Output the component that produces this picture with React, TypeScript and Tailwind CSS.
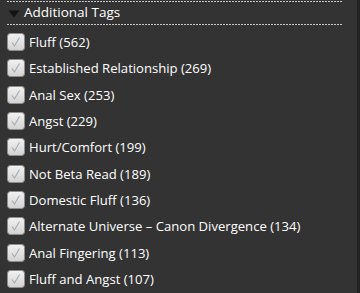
import React from "react";

const tags = [
  "Fluff (562)",
  "Established Relationship (269)",
  "Anal Sex (253)",
  "Angst (229)",
  "Hurt/Comfort (199)",
  "Not Beta Read (189)",
  "Domestic Fluff (136)",
  "Alternate Universe – Canon Divergence (134)",
  "Anal Fingering (113)",
  "Fluff and Angst (107)",
];

function Check() {
  return (
    <svg width="18" height="18" viewBox="0 0 18 18" className="shrink-0">
      <defs>
        <linearGradient id="cbg" x1="0" y1="0" x2="0" y2="1">
          <stop offset="0" stopColor="#f2f2f2" />
          <stop offset="1" stopColor="#d2d2d2" />
        </linearGradient>
      </defs>
      <rect x="0.5" y="0.5" width="17" height="17" rx="3" fill="url(#cbg)" stroke="#8e8e8e" />
      <path d="M5 9.5 L7.5 13 L12.5 4.5" fill="none" stroke="#a4acba" strokeWidth="1.1" />
    </svg>
  );
}

function Dots() {
  return (
    <div className="h-px w-[335px] bg-[repeating-linear-gradient(90deg,#c8c8c8_0_2px,transparent_2px_3px)]" />
  );
}

export default function App() {
  return (
    <div
      className="w-[360px] h-[293px] bg-[#333333] overflow-hidden flex text-white"
      style={{ fontFamily: '"Open Sans", "Noto Sans", sans-serif' }}
    >
      <div className="flex-1 pl-[7px] pt-px">
        <Dots />
        <div className="h-[22px] flex items-center">
          <svg width="12" height="8" viewBox="0 0 12 8" className="ml-[1px] mt-[1px] shrink-0">
            <path d="M0.5 0.5 L11.5 0.5 L6 7.5 Z" fill="#141414" />
          </svg>
          <span className="ml-[4px] text-[13.5px] leading-none">Additional Tags</span>
        </div>
        <Dots />
        <div className="pt-[8px] flex flex-col">
          {tags.map((t) => (
            <div key={t} className="h-[26.33px] flex items-start">
              <Check />
              <span className="ml-[4px] text-[13.1px] leading-[18px] whitespace-nowrap">{t}</span>
            </div>
          ))}
        </div>
      </div>
      <div className="w-[3px] bg-[#242424]" />
    </div>
  );
}
